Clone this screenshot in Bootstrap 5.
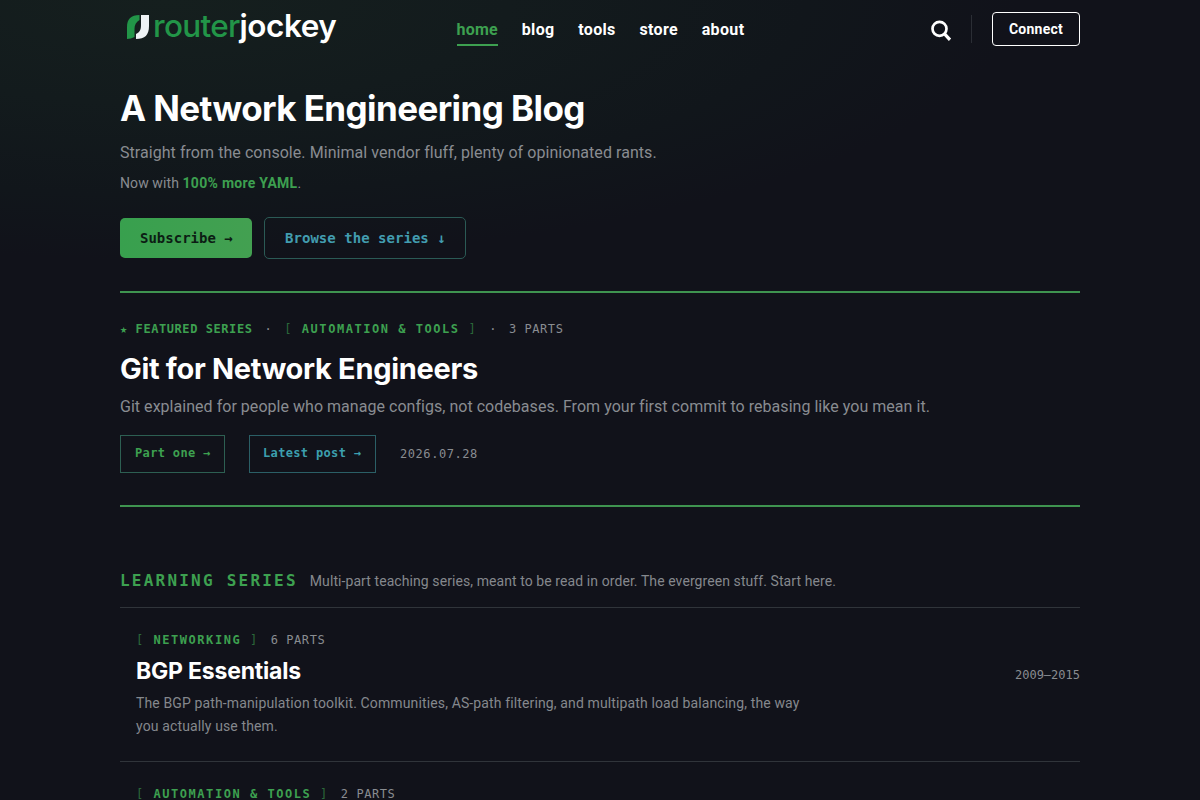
<!DOCTYPE html>
<html lang="en">
<head>
<meta charset="utf-8">
<meta name="viewport" content="width=device-width, initial-scale=1">
<title>routerjockey</title>
<link rel="stylesheet" href="https://cdn.jsdelivr.net/npm/bootstrap@5.3.0/dist/css/bootstrap.min.css">
<script src="https://cdn.jsdelivr.net/npm/bootstrap@5.3.0/dist/js/bootstrap.bundle.min.js"></script>
<style>
html,body{height:100%}
:root{--green:#3da050;--cyan:#429caf;--muted:#898c91;--edge:#2b5a55}
body{background:radial-gradient(850px 260px at 14% 0,#151f1e 0,#131b1d 40%,#11161b 75%,#11121a 100%) #11121a;color:#fff;font-family:Roboto,"Liberation Sans",sans-serif;overflow:hidden}
a{text-decoration:none}
.page-col{width:960px;height:100vh;overflow:hidden}
.site-head{height:59px}
.brand{width:232px;height:40px;margin:-3px 0 0 7px}
.brand-word{font:600 31.5px/40px Inter,sans-serif;letter-spacing:-.45px;margin:-2px 0 0 -1px}
.brand-word .rt{color:#229548;font-weight:500;letter-spacing:-.7px}
.site-nav{gap:24px;margin-left:97.5px}
.site-nav a{font-weight:700;font-size:16px;line-height:24px;letter-spacing:.35px;color:#fff;padding:4px 0 2px;border-bottom:2px solid transparent;margin-right:-.3px}
.site-nav a.active{color:var(--green);border-color:var(--green);letter-spacing:.25px}
.head-tools{gap:20px;margin-top:-1px}
.divide{width:1px;height:28px;background:#2b2e35}
.connect{width:88px;height:34px;border:1px solid #fff;border-radius:4px;font-weight:700;font-size:14px;letter-spacing:.27px;color:#fff}
h1,h2,h3{font-family:Inter,sans-serif;font-weight:700;margin:0}
h1{font-size:35px;line-height:44px;letter-spacing:-.59px;margin-top:27px}
h2{font-size:29px;line-height:40px;letter-spacing:-.31px;margin-top:10px}
h3{font-size:23px;line-height:36px;letter-spacing:-.2px;margin-top:3px}
.tagline{font-size:16px;line-height:24px;letter-spacing:.055px;color:var(--muted);margin:11px 0 0}
.featured .tagline{letter-spacing:.032px;margin-top:6px}
.yaml{font-size:14px;line-height:22px;letter-spacing:.1px;color:var(--muted);margin:7px 0 23px}
.yaml b{color:var(--green);letter-spacing:.28px}
.mono{font-family:"DejaVu Sans Mono",monospace;white-space:pre}
.cta{height:40px;border-radius:5px;padding:0 19px 0 20px;font-weight:700;font-size:14px;letter-spacing:0}
.cta-fill{background:linear-gradient(90deg,#38a04e,#43a051);color:#0c1d14;width:132px}
.cta-line{height:42px;border:1px solid var(--edge);color:var(--cyan);letter-spacing:.03px;width:202px}
.rule-green{height:2px;background:#3f9450}
.cta-row{gap:12px;margin-bottom:32px}
.meta{font-size:12px;line-height:20px;gap:12px;letter-spacing:.56px;color:var(--muted)}
.meta .dim{opacity:.6;font-weight:400}
.kicker{font-weight:700;color:var(--green);letter-spacing:.57px}
.topic{font-weight:700;color:var(--green);letter-spacing:1.54px}
.featured{padding:26px 0 32px}
.small-cta{width:105px;height:38px;padding:0 0 3px 14px;border:1px solid #2d5f52;font-size:12px;letter-spacing:.34px;color:var(--green);font-weight:700}
.small-cta.cy{width:127px;padding-left:13px;color:#3c9fae;border-color:#2b5f66}
.section-head{margin-top:62px;height:39px;border-bottom:1px solid #30343a;gap:12px}
.section-title{font-weight:700;font-size:16px;line-height:24px;letter-spacing:2.22px;color:var(--green)}
.section-note{font-size:14px;line-height:24px;letter-spacing:.08px;color:#85888d}
.series-item{height:154px;padding:22px 0 0 16px;border-bottom:1px solid #30343a}
.series-desc{font-size:14px;line-height:23px;letter-spacing:.13px;color:#85888d;width:680px;margin:3px 0 0}
.years{font-size:12px;line-height:20px;color:var(--muted);margin-top:35px}
</style>
</head>
<body>
<div class="page-col mx-auto">
  <header class="site-head d-flex align-items-center">
    <a href="#" class="brand d-flex">
      <svg class="flex-shrink-0" width="27" height="40" viewBox="0 0 27 40" aria-hidden="true"><path fill="#229548" d="M0 31V19C0 11 4 7 12.500 7V12C9 14 7.500 17 7.500 21V29Q4 31 0 31Z"/><path fill="#eef3f5" d="M14 7H22V18C22 27 18 31 9 31V26C13 24.500 14 21 14 17Z"/></svg>
      <span class="brand-word text-nowrap"><span class="rt">router</span><span class="text-white">jockey</span></span>
    </a>
    <nav class="site-nav d-flex">
      <a href="#" class="active">home</a><a href="#">blog</a><a href="#">tools</a><a href="#">store</a><a href="#">about</a>
    </nav>
    <div class="head-tools d-flex align-items-center ms-auto">
      <svg class="mt-1" width="20" height="22" viewBox="0 0 20 22" fill="none" stroke="#fff" stroke-width="2.700" aria-label="Search"><circle cx="8.500" cy="8.800" r="7"/><path stroke-width="3.200" d="M13.300 13.700L19 19.800"/></svg>
      <span class="divide"></span>
      <a href="#" class="connect d-flex align-items-center justify-content-center">Connect</a>
    </div>
  </header>

  <main>
    <section>
      <h1>A Network Engineering Blog</h1>
      <p class="tagline">Straight from the console. Minimal vendor fluff, plenty of opinionated rants.</p>
      <p class="yaml">Now with <b>100% more YAML</b>.</p>
      <div class="cta-row d-flex align-items-center">
        <a href="#" class="cta cta-fill mono d-flex align-items-center">Subscribe →</a>
        <a href="#" class="cta cta-line mono d-flex align-items-center">Browse the series ↓</a>
      </div>
    </section>

    <div class="rule-green"></div>

    <section class="featured">
      <div class="meta mono d-flex"><span class="kicker">★ FEATURED SERIES</span><span>·</span><span class="topic"><span class="dim">[</span> AUTOMATION &amp; TOOLS <span class="dim">]</span></span><span>·</span><span>3 PARTS</span></div>
      <h2>Git for Network Engineers</h2>
      <p class="tagline">Git explained for people who manage configs, not codebases. From your first commit to rebasing like you mean it.</p>
      <div class="d-flex align-items-center gap-4 mt-3">
        <a href="#" class="small-cta mono d-flex align-items-center">Part one →</a>
        <a href="#" class="small-cta cy mono d-flex align-items-center">Latest post →</a>
        <span class="meta mono">2026.07.28</span>
      </div>
    </section>

    <div class="rule-green"></div>

    <section>
      <div class="section-head d-flex"><span class="section-title mono">LEARNING SERIES</span><span class="section-note">Multi-part teaching series, meant to be read in order. The evergreen stuff. Start here.</span></div>
      <article class="series-item d-flex justify-content-between">
        <div>
          <div class="meta mono d-flex"><span class="topic"><span class="dim">[</span> NETWORKING <span class="dim">]</span></span><span>6 PARTS</span></div>
          <h3>BGP Essentials</h3>
          <p class="series-desc">The BGP path-manipulation toolkit. Communities, AS-path filtering, and multipath load balancing, the way you actually use them.</p>
        </div>
        <span class="years mono">2009–2015</span>
      </article>
      <article class="series-item">
        <div class="meta mono d-flex"><span class="topic"><span class="dim">[</span> AUTOMATION &amp; TOOLS <span class="dim">]</span></span><span>2 PARTS</span></div>
      </article>
    </section>
  </main>
</div>
</body>
</html>
